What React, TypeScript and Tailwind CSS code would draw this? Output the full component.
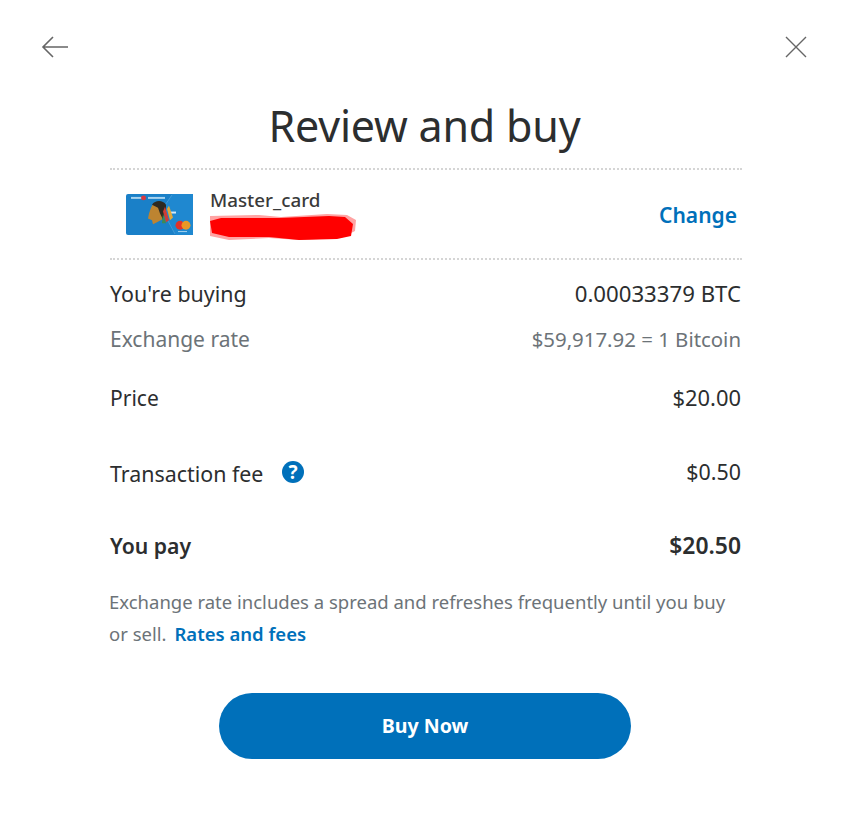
const font = "font-['Noto_Sans',sans-serif]";

const CardImage = () => (
  <svg width="67" height="41" viewBox="0 0 67 42" preserveAspectRatio="none" className="block blur-[0.4px]">
    <rect width="67" height="42" rx="2" fill="#1a80c8" />
    <path d="M46 0 L36 16 L50 42 L67 42 L67 0 Z" fill="#1f88d0" />
    <path d="M46 1 L36 16 L49 41" fill="none" stroke="#5aa8de" strokeWidth="0.6" />
    <rect x="5" y="3" width="11" height="2" fill="#a9d3ef" />
    <circle cx="17.5" cy="4" r="2.5" fill="#d8383f" />
    <rect x="22" y="3" width="17" height="2" fill="#a9d3ef" />
    <rect x="44" y="18" width="6" height="2" fill="#d5e9f7" />
    <path d="M23 20 L25 14 C27 9 31 8 35 9 L37 16 L36 26 L31 29 L27 31 L26 27 L22 25 Z" fill="#bd8431" />
    <path d="M26 11 C29 6 37 6 40 11 L40 18 L37 26 L34 20 L32 14 Z" fill="#2e2a22" />
    <path d="M39 13 L43 27 L40 29 L37 18 Z" fill="#d23c35" />
    <path d="M43 12 L47 24 L44 27 L41 15 Z" fill="#e2a838" />
    <path d="M37 20 L40 30 L36 30 Z" fill="#3f8a52" />
    <circle cx="54" cy="32" r="4.5" fill="#e2322a" />
    <circle cx="60" cy="32" r="4.5" fill="#f29a1f" fillOpacity="0.95" />
    <rect x="52" y="38" width="9" height="1" fill="#a9d3ef" />
  </svg>
);

const Row = ({ label, value, className, valueClass }: { label: React.ReactNode; value: string; className: string; valueClass: string }) => (
  <div className={`flex items-center justify-between pr-px ${className}`}>
    <div className="flex items-center">{label}</div>
    <div className={valueClass}>{value}</div>
  </div>
);

export default function App() {
  return (
    <div className={`${font} w-[850px] h-[839px] bg-white text-[#2c2e2f] overflow-hidden`}>
      {/* top bar */}
      <div className="flex items-start justify-between pt-[33px] pl-[41px] pr-[42px] h-[75px]">
        <svg width="28" height="28" viewBox="0 0 28 28" fill="none" stroke="#666" strokeWidth="1.6">
          <path d="M27 14 H2 M12 4 L2 14 L12 24" />
        </svg>
        <svg width="24" height="24" viewBox="0 0 24 24" fill="none" stroke="#666" strokeWidth="1.4" className="mt-[2px]">
          <path d="M2 2 L22 22 M22 2 L2 22" />
        </svg>
      </div>

      <h1 className="text-center text-[43px] leading-[60px] mt-[21px] tracking-[-0.2px] pr-px">Review and buy</h1>

      <div className="mx-[110px] w-[632px] mt-[12px]">
        {/* payment method */}
        <div className="flex items-center h-[92px] border-y-2 border-dotted border-[#d5d5d5] pl-[16px] pr-[5px]">
          <CardImage />
          <div className="ml-[17px] flex-1 self-start pt-[18px]">
            <div className="text-[18.8px] leading-[24px] font-medium text-[#3a3a3a]">Master_card</div>
            <svg width="148" height="28" viewBox="0 0 148 28" className="block -ml-px mt-[1px]">
              <path d="M1 3 L50 2 L72 4 L118 1 L138 2 L147 7 L146 18 L132 25 L90 27 L60 25 L20 27 L1 23 Z" fill="#ffa3a3" />
              <path d="M1 8 L12 5 L70 5 L120 3 L136 4 L144 11 L142 23 L128 26 L90 27 L60 24 L20 24 L3 20 Z" fill="#ff0000" />
            </svg>
          </div>
          <div className="text-[21px] font-semibold text-[#0070ba] mt-[4px]">Change</div>
        </div>

        <Row label="You're buying" value="0.00033379 BTC" valueClass="text-[22.2px]" className="text-[21.4px] leading-[30px] mt-[19px]" />
        <Row label="Exchange rate" value="$59,917.92 = 1 Bitcoin" valueClass="text-[20.4px]" className="text-[21px] leading-[30px] mt-[15px] text-[#6c7378]" />
        <Row label="Price" value="$20.00" valueClass="text-[21.9px]" className="text-[21px] leading-[30px] mt-[29px]" />
        <Row
          label={
            <>
              <span className="mt-[4px]">Transaction fee</span>
              <svg width="24" height="24" viewBox="0 0 24 24" className="ml-[18px] -mt-[1px]">
                <circle cx="12" cy="12" r="11" fill="#0070ba" />
                <text x="12" y="18.5" textAnchor="middle" fontSize="19" fontWeight="700" fill="#fff" fontFamily="Noto Sans">?</text>
              </svg>
            </>
          }
          value="$0.50"
          valueClass="text-[21.4px]"
          className="text-[21.4px] leading-[30px] mt-[42px]"
        />
        <Row label="You pay" value="$20.50" valueClass="text-[22.9px]" className="text-[21.2px] leading-[30px] mt-[42px] font-semibold" />

        <p className="text-[18.5px] leading-[32px] text-[#6c7378] mt-[25px] -ml-px">
          Exchange rate includes a spread and refreshes frequently until you buy
          <br />
          or sell.
          <span className="ml-[8px] font-semibold text-[#0070ba]">Rates and fees</span>
        </p>

        <div className="flex justify-center mt-[43px] pr-[2px]">
          <button className="w-[412px] h-[66px] rounded-full bg-[#0070ba] text-white text-[19.6px] font-bold">
            Buy Now
          </button>
        </div>
      </div>
    </div>
  );
}
